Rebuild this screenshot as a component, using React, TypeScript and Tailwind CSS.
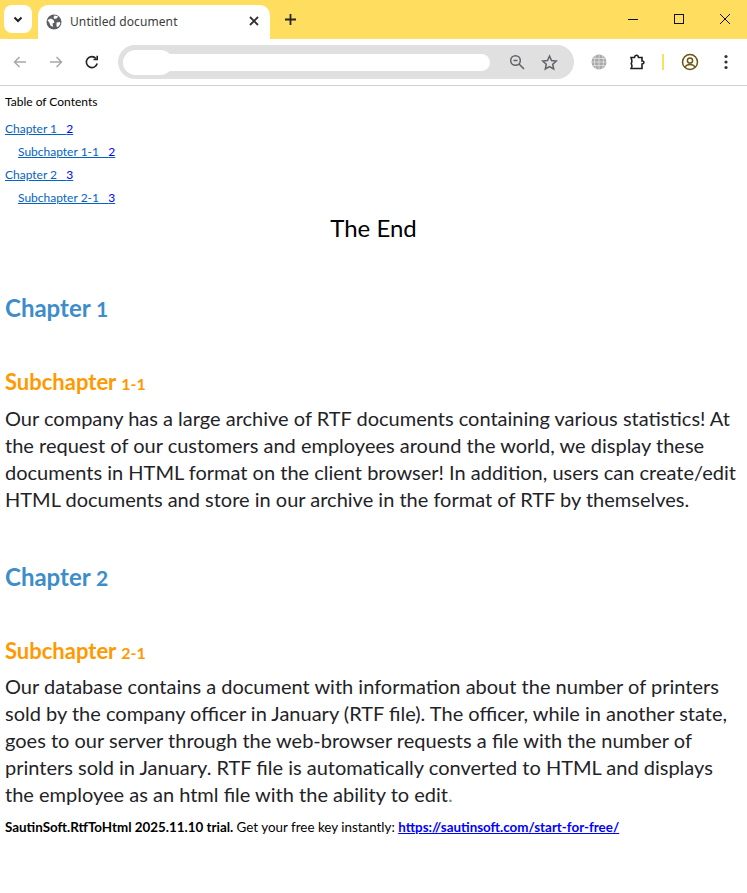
import React from "react";

const font = { fontFamily: "Lato, sans-serif" };

function TabBar() {
  return (
    <div className="flex h-[39px] bg-[#ffdd5e] items-start relative">
      <div className="ml-1 mt-[5px] w-7 h-7 bg-white rounded-lg flex items-center justify-center">
        <svg width="12" height="12" viewBox="0 0 12 12" fill="none" stroke="#1f1f1f" strokeWidth="2"><path d="M2.5 4.5 6 8l3.5-3.5" /></svg>
      </div>
      <div className="ml-[6px] mt-[5px] w-[232px] h-[34px] bg-white rounded-t-[10px] flex items-center relative">
        <svg className="ml-2 shrink-0" width="16" height="16" viewBox="0 0 16 16">
          <circle cx="8" cy="8" r="7.500" fill="#5b5e62" />
          <path d="M1.500 6 5 4.500l2.500 1.500 1 2.500-2 1 .5 3.500L4.500 11.500 3.500 9ZM8.500 1.500l3.500.8-1 2-2.500.7L7.500 3.500ZM10.500 8.500l3.500-.5.300 2-2.300 3-1.500-.5Z" fill="#fff" />
        </svg>
        <span className="ml-[8px] text-[12px] text-[#3c3c3c] tracking-[0.1px]" style={{ fontFamily: "'Noto Sans', sans-serif" }}>Untitled document</span>
        <svg className="absolute right-[10px] top-[10px]" width="12" height="12" viewBox="0 0 12 12" stroke="#303030" strokeWidth="1.800"><path d="M2 2l8 8M10 2l-8 8" /></svg>
      </div>
      <svg className="ml-[14px] mt-[13px]" width="13" height="13" viewBox="0 0 13 13" stroke="#262626" strokeWidth="1.800"><path d="M6.500 1v11M1 6.500h11" /></svg>
      <div className="ml-auto flex items-center mt-[12px] mr-[15px] gap-[32px]">
        <svg width="14" height="14" viewBox="0 0 14 14" stroke="#111" strokeWidth="1"><path d="M2 7.500h10" /></svg>
        <svg width="14" height="14" viewBox="0 0 14 14" fill="none" stroke="#111" strokeWidth="1"><rect x="2.500" y="2.500" width="9" height="9" /></svg>
        <svg width="14" height="14" viewBox="0 0 14 14" stroke="#111" strokeWidth="1"><path d="M2 2l10 10M12 2 2 12" /></svg>
      </div>
    </div>
  );
}

function Toolbar() {
  return (
    <div className="h-[47px] bg-white border-b border-[#d0d0d0] flex items-center relative rounded-tl-lg">
      <svg className="ml-[12px]" width="16" height="16" viewBox="0 0 16 16" fill="none" stroke="#a8a8a8" strokeWidth="1.500"><path d="M14 8H2.500M7.500 3l-5 5 5 5" /></svg>
      <svg className="ml-[20px]" width="16" height="16" viewBox="0 0 16 16" fill="none" stroke="#a8a8a8" strokeWidth="1.500"><path d="M2 8h11.500M8.500 3l5 5-5 5" /></svg>
      <svg className="ml-[20px]" width="16" height="16" viewBox="0 0 16 16" fill="none" stroke="#222" strokeWidth="1.600"><path d="M13.200 9.500A5.500 5.500 0 1 1 12 4.500" /><path d="M13.200 1.800v3.700H9.500" /></svg>
      <div className="ml-[18px] w-[456px] h-[34px] bg-[#e0e0e0] rounded-full flex items-center">
        <div className="ml-[5px] w-[367px] h-[17px] bg-white rounded-full relative">
          <div className="absolute left-0 top-[-4px] w-[50px] h-[25px] bg-white rounded-full" />
        </div>
        <svg className="ml-[19px]" width="16" height="16" viewBox="0 0 16 16" fill="none" stroke="#5f6368" strokeWidth="1.500"><circle cx="6.500" cy="6.500" r="4.800" /><path d="M4.500 6.500h4M10 10l5 5" /></svg>
        <svg className="ml-[16px]" width="17" height="17" viewBox="0 0 17 17" fill="none" stroke="#5f6368" strokeWidth="1.500"><path d="m8.500 2 2 4.500 4.800.5-3.600 3.200 1 4.800-4.200-2.500L4.300 15l1-4.800L1.700 7l4.800-.5Z" /></svg>
      </div>
      <svg className="ml-[17px]" width="16" height="16" viewBox="0 0 16 16" fill="none"><circle cx="8" cy="8" r="7.500" fill="#a9a9a9" /><path d="M.5 8h15M2 4.500h12M2 11.500h12M8 .5v15M5 1c-2 4-2 10 0 14M11 1c2 4 2 10 0 14" stroke="#e8e8e8" strokeWidth=".7" /></svg>
      <svg className="ml-[21px]" width="18" height="18" viewBox="0 0 18 18" fill="none" stroke="#1f1f1f" strokeWidth="1.600"><path d="M3 4.500h3.500C6.500 2 10 1 10.500 4.500H14V8c2.500-.5 2.500 3 0 3v4.500H3.200c1-1.500 1.200-3 .2-4.500-.4-.5-.4-.5 0-1 1-1.500.4-3.500-.4-5.500Z" /></svg>
      <div className="ml-[16px] w-[2px] h-[16px] bg-[#ffdd5e]" />
      <svg className="ml-[17px]" width="18" height="18" viewBox="0 0 18 18" fill="none" stroke="#6b5310" strokeWidth="1.500"><circle cx="9" cy="9" r="7.500" /><circle cx="9" cy="7.500" r="2.600" /><path d="M4 14c2-3.500 8-3.500 10 0" /></svg>
      <svg className="ml-[25px]" width="4" height="16" viewBox="0 0 4 16" fill="#333"><circle cx="2" cy="2.500" r="1.600" /><circle cx="2" cy="8" r="1.600" /><circle cx="2" cy="13.500" r="1.600" /></svg>
    </div>
  );
}

const tocLink = "text-[12px] leading-[23px] text-[#0563c1] underline decoration-[#0563c1] block";

function Toc({ label, page, indent }: { label: string; page: string; indent?: boolean }) {
  return (
    <div className={indent ? "pl-[13px]" : ""}>
      <a href="#" className={tocLink}>{label}<span className="text-[#0000ff] whitespace-pre">{"   "}{page}</span></a>
    </div>
  );
}

const h1 = "text-[24px] font-bold text-[#3c8dc9] leading-[28px]";
const h2 = "text-[22px] font-bold text-[#ff9900] leading-[24px]";
const para = "text-[20px] leading-[27px] text-[#1f2328]";

export default function App() {
  return (
    <div className="w-[747px] h-[893px] bg-white overflow-hidden">
      <TabBar />
      <Toolbar />
      <div className="px-[5px]" style={font}>
        <p className="text-[12px] leading-[16px] pt-[8px] text-black">Table of Contents</p>
        <div className="mt-[7px]">
          <Toc label="Chapter 1" page="2" />
          <Toc label="Subchapter 1-1" page="2" indent />
          <Toc label="Chapter 2" page="3" />
          <Toc label="Subchapter 2-1" page="3" indent />
        </div>
        <p className="text-center text-[24px] leading-[30px] mt-[4px] text-black">The End</p>
        <h1 className={`${h1} mt-[51px]`}>Chapter <span className="text-[21px]">1</span></h1>
        <h2 className={`${h2} mt-[47px]`}>Subchapter <span className="text-[16px]">1-1</span></h2>
        <p className={`${para} mt-[9px]`}>Our company has a large archive of RTF documents containing various statistics! At the request of our customers and employees around the world, we display these documents in HTML format on the client browser! In addition, users can create/edit HTML documents and store in our archive in the format of RTF by themselves.</p>
        <h1 className={`${h1} mt-[50px]`}>Chapter <span className="text-[21px]">2</span></h1>
        <h2 className={`${h2} mt-[47px]`}>Subchapter <span className="text-[16px]">2-1</span></h2>
        <p className={`${para} mt-[8px]`}>Our database contains a document with information about the number of printers sold by the company officer in January (RTF file). The officer, while in another state, goes to our server through the web-browser requests a file with the number of printers sold in January. RTF file is automatically converted to HTML and displays the employee as an html file with the ability to edit<span className="text-[#6b8e9e]">.</span></p>
        <p className="text-[13.400px] leading-[16px] mt-[11px] text-black"><b>SautinSoft.RtfToHtml 2025.11.10 trial.</b> Get your free key instantly: <a href="#" className="text-[#0000ff] font-bold underline">https://sautinsoft.com/start-for-free/</a></p>
      </div>
    </div>
  );
}
